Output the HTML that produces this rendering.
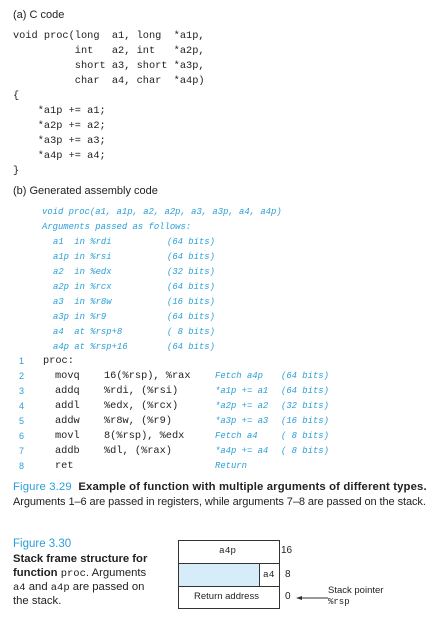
<!DOCTYPE html>
<html><head><meta charset="utf-8"><style>
body{margin:0;width:444px;height:632px;background:#fff;position:relative;overflow:hidden;font-family:"Liberation Sans",sans-serif;color:#222}
.t{position:absolute;white-space:pre;line-height:1}
.m{font-family:"Liberation Mono",monospace;font-size:10.3px;color:#222}
.b{font-family:"Liberation Mono",monospace;font-size:8.9px;color:#2a9fd8;font-style:italic}
.s{font-size:11px}
.n{font-size:9px;color:#2a9fd8}
.blue{color:#2a9fd8}
</style></head><body>
<div class="t s" style="left:13px;top:10px">(a) C code</div>
<div class="t m" style="left:13px;top:31px">void proc(long  a1, long  *a1p,</div>
<div class="t m" style="left:13px;top:46px">          int   a2, int   *a2p,</div>
<div class="t m" style="left:13px;top:61px">          short a3, short *a3p,</div>
<div class="t m" style="left:13px;top:76px">          char  a4, char  *a4p)</div>
<div class="t m" style="left:13px;top:91px">{</div>
<div class="t m" style="left:13px;top:106px">    *a1p += a1;</div>
<div class="t m" style="left:13px;top:121px">    *a2p += a2;</div>
<div class="t m" style="left:13px;top:136px">    *a3p += a3;</div>
<div class="t m" style="left:13px;top:151px">    *a4p += a4;</div>
<div class="t m" style="left:13px;top:166px">}</div>
<div class="t s" style="left:13px;top:186px">(b) Generated assembly code</div>

<div class="t b" style="left:42px;top:208px">void proc(a1, a1p, a2, a2p, a3, a3p, a4, a4p)</div>
<div class="t b" style="left:42px;top:223px">Arguments passed as follows:</div>
<div class="t b" style="left:53px;top:238px">a1  in %rdi</div><div class="t b" style="left:167px;top:238px">(64 bits)</div>
<div class="t b" style="left:53px;top:253px">a1p in %rsi</div><div class="t b" style="left:167px;top:253px">(64 bits)</div>
<div class="t b" style="left:53px;top:268px">a2  in %edx</div><div class="t b" style="left:167px;top:268px">(32 bits)</div>
<div class="t b" style="left:53px;top:283px">a2p in %rcx</div><div class="t b" style="left:167px;top:283px">(64 bits)</div>
<div class="t b" style="left:53px;top:298px">a3  in %r8w</div><div class="t b" style="left:167px;top:298px">(16 bits)</div>
<div class="t b" style="left:53px;top:313px">a3p in %r9</div><div class="t b" style="left:167px;top:313px">(64 bits)</div>
<div class="t b" style="left:53px;top:328px">a4  at %rsp+8</div><div class="t b" style="left:167px;top:328px">( 8 bits)</div>
<div class="t b" style="left:53px;top:343px">a4p at %rsp+16</div><div class="t b" style="left:167px;top:343px">(64 bits)</div>

<div class="t n" style="left:19px;top:357px">1</div>
<div class="t n" style="left:19px;top:372px">2</div>
<div class="t n" style="left:19px;top:387px">3</div>
<div class="t n" style="left:19px;top:402px">4</div>
<div class="t n" style="left:19px;top:417px">5</div>
<div class="t n" style="left:19px;top:432px">6</div>
<div class="t n" style="left:19px;top:447px">7</div>
<div class="t n" style="left:19px;top:462px">8</div>
<div class="t m" style="left:43px;top:356px">proc:</div>
<div class="t m" style="left:55px;top:371px">movq</div><div class="t m" style="left:104px;top:371px">16(%rsp), %rax</div>
<div class="t m" style="left:55px;top:386px">addq</div><div class="t m" style="left:104px;top:386px">%rdi, (%rsi)</div>
<div class="t m" style="left:55px;top:401px">addl</div><div class="t m" style="left:104px;top:401px">%edx, (%rcx)</div>
<div class="t m" style="left:55px;top:416px">addw</div><div class="t m" style="left:104px;top:416px">%r8w, (%r9)</div>
<div class="t m" style="left:55px;top:431px">movl</div><div class="t m" style="left:104px;top:431px">8(%rsp), %edx</div>
<div class="t m" style="left:55px;top:446px">addb</div><div class="t m" style="left:104px;top:446px">%dl, (%rax)</div>
<div class="t m" style="left:55px;top:461px">ret</div>
<div class="t b" style="left:215px;top:372px">Fetch a4p</div><div class="t b" style="left:281px;top:372px">(64 bits)</div>
<div class="t b" style="left:215px;top:387px">*a1p += a1</div><div class="t b" style="left:281px;top:387px">(64 bits)</div>
<div class="t b" style="left:215px;top:402px">*a2p += a2</div><div class="t b" style="left:281px;top:402px">(32 bits)</div>
<div class="t b" style="left:215px;top:417px">*a3p += a3</div><div class="t b" style="left:281px;top:417px">(16 bits)</div>
<div class="t b" style="left:215px;top:432px">Fetch a4</div><div class="t b" style="left:281px;top:432px">( 8 bits)</div>
<div class="t b" style="left:215px;top:447px">*a4p += a4</div><div class="t b" style="left:281px;top:447px">( 8 bits)</div>
<div class="t b" style="left:215px;top:462px">Return</div>

<div class="t" style="left:13px;top:482px;font-size:11.3px;letter-spacing:0.15px"><span class="blue">Figure 3.29</span>&nbsp; <b>Example of function with multiple arguments of different types.</b></div>
<div class="t" style="left:13px;top:497px;font-size:11px;letter-spacing:-0.08px">Arguments 1–6 are passed in registers, while arguments 7–8 are passed on the stack.</div>

<div class="t blue" style="left:13px;top:539px;font-size:11.5px">Figure 3.30</div>
<div class="t" style="left:13px;top:554px;font-size:11.3px;font-weight:bold">Stack frame structure for</div>
<div class="t" style="left:13px;top:568px;font-size:11.3px"><b>function</b> <span style="font-family:'Liberation Mono',monospace;font-size:10.5px">proc</span>. Arguments</div>
<div class="t" style="left:13px;top:582px;font-size:11.3px"><span style="font-family:'Liberation Mono',monospace;font-size:10.5px">a4</span> and <span style="font-family:'Liberation Mono',monospace;font-size:10.5px">a4p</span> are passed on</div>
<div class="t" style="left:13px;top:596px;font-size:11.3px">the stack.</div>

<div style="position:absolute;left:178px;top:540px;width:100px;height:67px;border:1px solid #333"></div>
<div style="position:absolute;left:178px;top:563px;width:101px;height:1px;background:#333"></div>
<div style="position:absolute;left:178px;top:586px;width:101px;height:1px;background:#333"></div>
<div style="position:absolute;left:179px;top:564px;width:80px;height:22px;background:#d6ecf8"></div>
<div style="position:absolute;left:259px;top:563px;width:1px;height:23px;background:#333"></div>
<div class="t m" style="left:219px;top:546px;font-size:9.5px">a4p</div>
<div class="t m" style="left:263px;top:570px;font-size:9.5px">a4</div>
<div class="t" style="left:194px;top:592px;font-size:9.5px">Return address</div>
<div class="t" style="left:281px;top:546px;font-size:10px">16</div>
<div class="t" style="left:285px;top:570px;font-size:10px">8</div>
<div class="t" style="left:285px;top:592px;font-size:10px">0</div>
<svg style="position:absolute;left:295px;top:592px" width="35" height="12"><line x1="4" y1="6" x2="33" y2="6" stroke="#333" stroke-width="1"/><path d="M1 6 L7 4 L7 8 Z" fill="#333"/></svg>
<div class="t" style="left:328px;top:586px;font-size:9.5px">Stack pointer</div>
<div class="t m" style="left:328px;top:598px;font-size:9px">%rsp</div>
</body></html>
